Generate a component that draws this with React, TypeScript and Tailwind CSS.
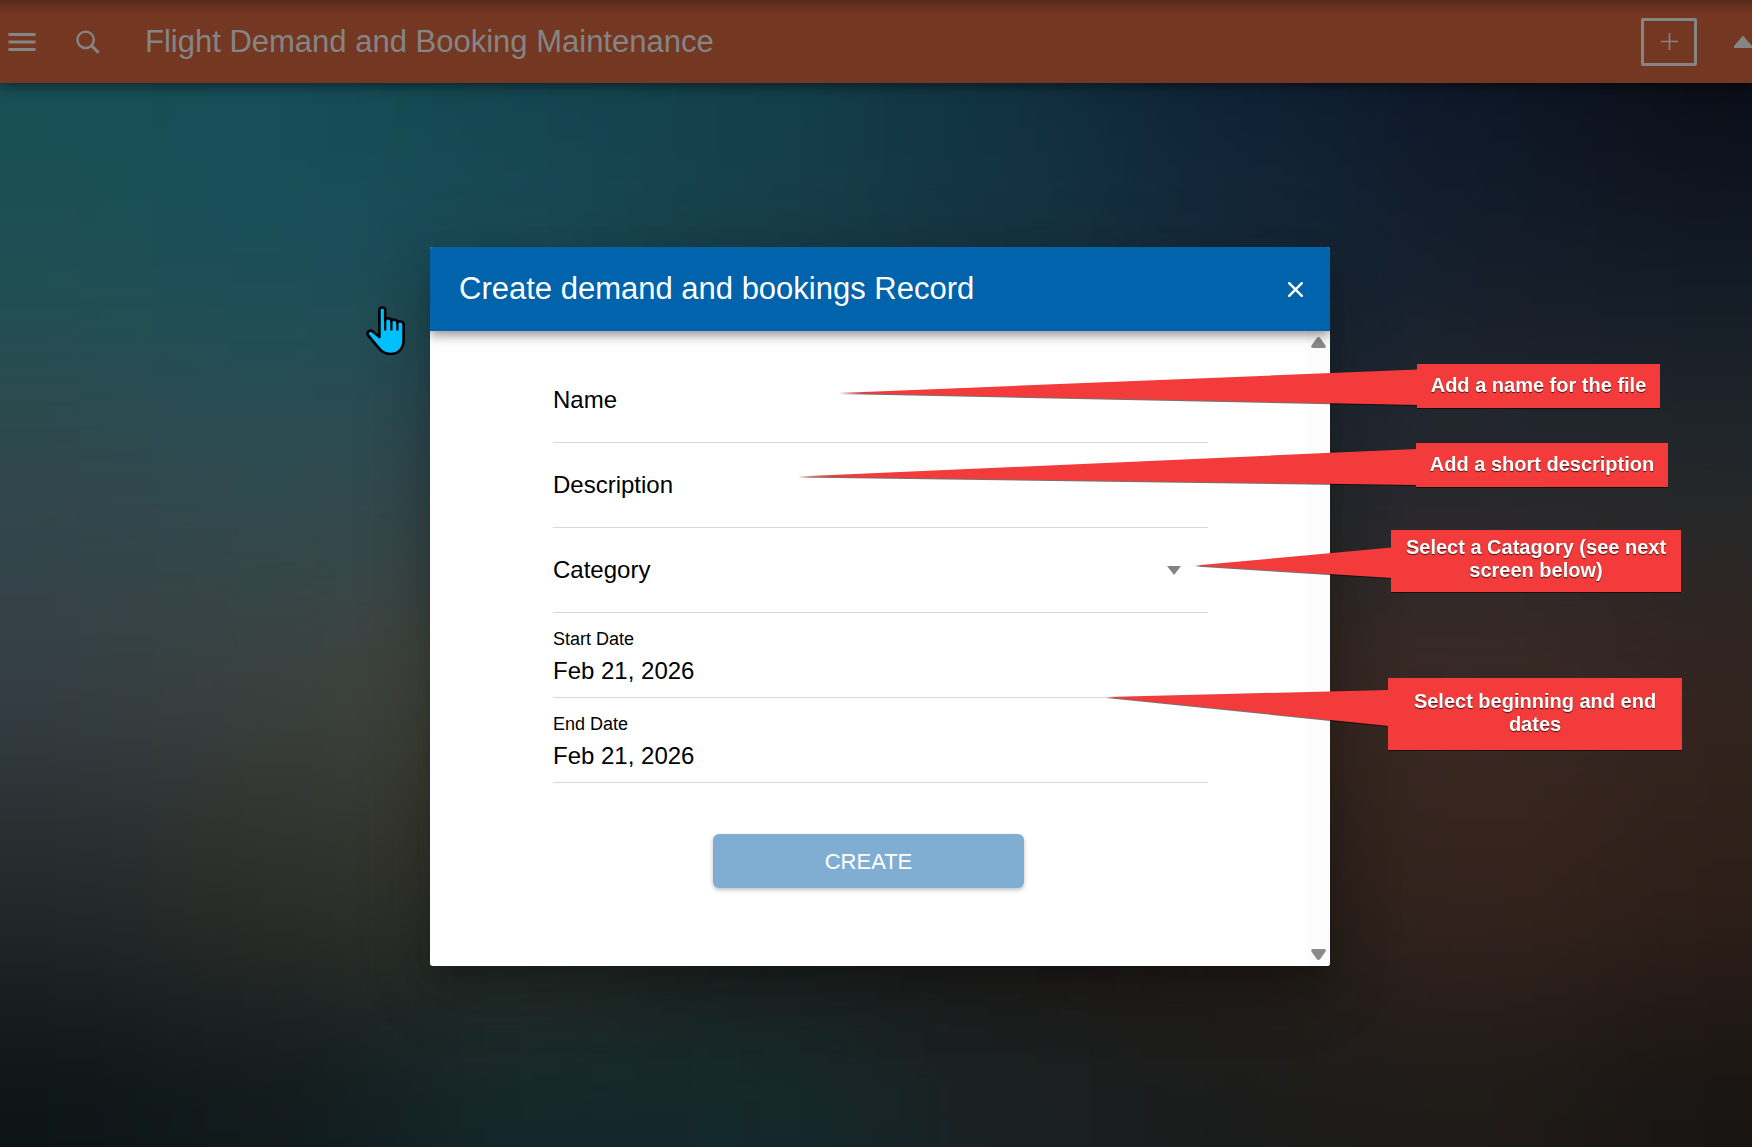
import { FunctionComponent, ReactElement, ReactNode } from 'react';
import { MdMenu } from 'react-icons/md';

/**
 * Colours of the soft backdrop, from top left to bottom right
 */
const backdropRows: string[][] = [
  ['#164e56', '#154d56', '#12454f', '#12404a', '#0f3240', '#0d2035', '#0c1626', '#0a0b14'],
  ['#1e5054', '#1b4f5a', '#1a4b55', '#183f4b', '#163544', '#15293a', '#141d2a', '#111a25'],
  ['#31484c', '#2e4b51', '#32484d', '#2a3438', '#28282b', '#202930', '#26282e', '#23282b'],
  ['#363f46', '#3b423f', '#46453b', '#2c2a24', '#2c2521', '#35271f', '#3b2a25', '#33241f'],
  ['#232a2a', '#2d2f2a', '#34332a', '#25241e', '#211d19', '#2a201b', '#36241d', '#2f1f19'],
  ['#0c1416', '#111a1c', '#13272a', '#13292c', '#1a2022', '#1a1c1b', '#1f1b18', '#181513']
];

/**
 * Used to render the blurred page backdrop, the outer
 * cells reach past the edge so that the blur does not fade there
 *
 * @returns The `Backdrop` component
 */
const Backdrop: FunctionComponent = (): ReactElement => {
  return (
    <svg
      className="absolute -inset-[5%] w-[110%] h-[110%] overflow-visible blur-[80px]"
      viewBox="0 0 8 6"
      preserveAspectRatio="none"
      shapeRendering="crispEdges"
      aria-hidden="true"
    >
      {
        backdropRows.map((row, y) => row.map((color, x) => (
          <rect
            key={`cell-${x}-${y}`}
            x={x === 0 ? -1 : x}
            y={y === 0 ? -1 : y}
            width={x === 0 || x === 7 ? 2 : 1}
            height={y === 0 || y === 5 ? 2 : 1}
            fill={color}
          />
        )))
      }
    </svg>
  );
};

/**
 * Used to render the top bar with the page title
 *
 * @returns The `AppHeader` component
 */
const AppHeader: FunctionComponent = (): ReactElement => {
  return (
    <header className="relative z-10 h-[83px] flex items-center pl-1 bg-[linear-gradient(#562a1a,#743722_14px)] text-[#858585] shadow-[0_3px_12px_rgba(0,0,0,0.5)]">
      <button type="button" aria-label="Menu">
        <MdMenu className="size-9" />
      </button>
      <button type="button" aria-label="Search" className="ml-9">
        <svg className="size-6" viewBox="0 0 24 24" fill="none" stroke="currentColor" aria-hidden="true">
          <circle cx="9.6" cy="9.8" r="8.2" strokeWidth="2.4" />
          <path d="M15.4 15.6L22.6 22.8" strokeWidth="3" />
        </svg>
      </button>
      <h1 className="ml-[45px] flex-1 text-[31px] leading-9 whitespace-nowrap">
        Flight Demand and Booking Maintenance
      </h1>
      <button
        type="button"
        aria-label="Add"
        className="w-14 h-12 flex items-center justify-center rounded-xs border-3 border-[#858585]"
      >
        <svg className="w-[17px] h-[17px]" viewBox="0 0 17 17" stroke="currentColor" strokeWidth="1.6">
          <path d="M8.5 0V17M0 8.5H17" />
        </svg>
      </button>
      <button type="button" aria-label="Collapse" className="ml-[37px]">
        <svg className="w-[18px] h-3" viewBox="0 0 18 12" fill="currentColor">
          <path d="M8.2 0.4Q9 -0.3 9.8 0.4L18 10V12H0V10Z" />
        </svg>
      </button>
    </header>
  );
};

interface FieldProps {
  readonly id: string;
  readonly label: string;
}

const rowClass = 'h-[85px] border-b border-[#d9d9d9]';

const TextField: FunctionComponent<FieldProps> = ({ id, label }): ReactElement => {
  return (
    <div className={`${rowClass} flex items-center gap-x-4`}>
      <label htmlFor={id} className="text-2xl">{label}</label>
      <input id={id} type="text" className="min-w-0 flex-1 h-12 text-2xl outline-none" />
    </div>
  );
};

const SelectField: FunctionComponent<FieldProps> = ({ id, label }): ReactElement => {
  return (
    <div className={`${rowClass} flex items-center gap-x-4 pr-[27px]`}>
      <label htmlFor={id} className="text-2xl">{label}</label>
      <select id={id} className="min-w-0 flex-1 h-12 appearance-none text-2xl outline-none">
        <option value="" />
      </select>
      <svg className="w-3.5 h-[9px] pointer-events-none" viewBox="0 0 14 9" fill="#838383" aria-hidden="true">
        <path d="M0 0H14L7 9Z" />
      </svg>
    </div>
  );
};

interface DateFieldProps extends FieldProps {
  readonly value: string;
}

const DateField: FunctionComponent<DateFieldProps> = ({ id, label, value }): ReactElement => {
  return (
    <div className={`${rowClass} flex flex-col gap-y-1 pt-3.5`}>
      <label htmlFor={id} className="text-lg leading-6">{label}</label>
      <input id={id} type="text" defaultValue={value} className="w-full h-8 text-2xl leading-8 outline-none" />
    </div>
  );
};

interface CalloutProps {
  readonly className: string;
  readonly boxClassName: string;
  readonly pointer: ReactNode;
  readonly children: ReactNode;
}

/**
 * Used to render a red note whose pointer reaches into the dialog
 *
 * @param props The component props
 * @returns The `Callout` component
 */
const Callout: FunctionComponent<CalloutProps> = ({ className, boxClassName, pointer, children }): ReactElement => {
  return (
    <div className={`absolute z-20 flex items-start drop-shadow-[0_1px_0_rgba(0,0,0,0.55)] ${className}`}>
      {pointer}
      <p className={`shrink-0 bg-[#f43b3b] text-center text-xl leading-[23px] font-bold text-white text-shadow-[0_1px_1px_rgba(0,0,0,0.7)] ${boxClassName}`}>
        {children}
      </p>
    </div>
  );
};

const HandPointer: FunctionComponent = (): ReactElement => {
  return (
    <svg
      className="absolute top-[59px] -left-16 w-10 h-[50px]"
      viewBox="0 0 40 50"
      fill="#00bfff"
      stroke="#000"
      strokeWidth="2.6"
      strokeLinejoin="round"
      aria-hidden="true"
    >
      <path d="M13.4 28V4C13.4 .6 19.2 .6 19.2 4V14C20 11.6 25 11.6 25.4 15C26.4 13 31.2 13 31.4 16.6C32.6 14.4 37.6 15 37.6 18.4V34C37.6 43 32 48 24.4 48C18.6 48 15 45.4 12.4 41.6L2.2 29.4C0 26.4 3.6 23.4 6.8 25.4L13.4 31Z" />
      <path fill="none" strokeWidth="2.2" d="M19.2 12V24.4M25.4 14V24.4M31.4 16V24.4" />
    </svg>
  );
};

const CreateDialog: FunctionComponent = (): ReactElement => {
  return (
    <section
      role="dialog"
      aria-labelledby="dialog-title"
      className="rounded-[3px] overflow-hidden bg-white text-black"
    >
      <div className="relative z-10 h-[84px] flex items-center justify-between pl-[29px] pr-[27px] bg-[#0063ab] text-white shadow-[0_3px_12px_rgba(0,0,0,0.5)]">
        <h2 id="dialog-title" className="text-[31px] leading-9">
          Create demand and bookings Record
        </h2>
        <button type="button" aria-label="Close">
          <svg className="size-[15px]" viewBox="0 0 15 15" stroke="currentColor" strokeWidth="2.4" strokeLinecap="round">
            <path d="M1.2 1.2L13.8 13.8M13.8 1.2L1.2 13.8" />
          </svg>
        </button>
      </div>
      <div className="flex">
        <form className="min-w-0 flex-1 pt-[27px] pb-[78px]">
          <div className="pl-[123px] pr-[99px]">
            <TextField id="name" label="Name" />
            <TextField id="description" label="Description" />
            <SelectField id="category" label="Category" />
            <DateField id="start-date" label="Start Date" value="Feb 21, 2026" />
            <DateField id="end-date" label="End Date" value="Feb 21, 2026" />
          </div>
          <button
            type="submit"
            className="mt-[51px] mx-auto w-[311px] h-[54px] flex items-center justify-center rounded-md bg-[#80aed3] text-[22px] text-white shadow-[0_2px_4px_rgba(0,0,0,0.25)]"
          >
            CREATE
          </button>
        </form>
        <div className="w-[23px] flex flex-col items-center justify-between pt-1.5 pb-1.5 bg-[#fcfcfc]" aria-hidden="true">
          <svg className="w-[15px] h-[11px]" viewBox="0 0 15 11" fill="#8a8a8a">
            <path d="M5.8 1Q7.5 -1 9.2 1L14.4 8.2Q15.6 11 13 11H2Q-.6 11 .6 8.2Z" />
          </svg>
          <svg className="w-[15px] h-[11px]" viewBox="0 0 15 11" fill="#8a8a8a">
            <path d="M5.8 10Q7.5 12 9.2 10L14.4 2.8Q15.6 0 13 0H2Q-.6 0 .6 2.8Z" />
          </svg>
        </div>
      </div>
    </section>
  );
};

const App: FunctionComponent = (): ReactElement => {
  return (
    <div className="relative min-h-screen flex flex-col overflow-hidden bg-[#16211f] font-['Liberation_Sans',Arial,sans-serif]">
      <Backdrop />
      <AppHeader />
      <main className="relative flex-1 flex items-start justify-center pt-41 pb-20 pl-2">
        <div className="relative w-full max-w-[900px] rounded-[3px] shadow-[0_16px_22px_-10px_rgba(0,0,0,0.2),0_36px_57px_4px_rgba(0,0,0,0.14),0_14px_69px_12px_rgba(0,0,0,0.12)]">
          <CreateDialog />
          <HandPointer />
          <Callout
            className="top-[117px] left-[411px]"
            boxClassName="w-[243px] h-11 pt-2.5"
            pointer={
              <svg className="shrink-0 w-[576px] h-11 overflow-visible" viewBox="0 0 576 44" fill="#f43b3b">
                <path d="M-2 29L577 5.5V41Z" />
              </svg>
            }
          >
            Add a name for the file
          </Callout>
          <Callout
            className="top-[196px] left-[370px]"
            boxClassName="w-[252px] h-11 pt-2.5"
            pointer={
              <svg className="shrink-0 w-[616px] h-11 overflow-visible" viewBox="0 0 616 44" fill="#f43b3b">
                <path d="M-2 33.6L617 6V42Z" />
              </svg>
            }
          >
            Add a short description
          </Callout>
          <Callout
            className="top-[283px] left-[766px]"
            boxClassName="w-[290px] h-[62px] px-3 pt-1.5"
            pointer={
              <svg className="shrink-0 w-[195px] h-[62px] overflow-visible" viewBox="0 0 195 62" fill="#f43b3b">
                <path d="M-1 35.6L196 17.6V48Z" />
              </svg>
            }
          >
            Select a Catagory (see next screen below)
          </Callout>
          <Callout
            className="top-[431px] left-[676px]"
            boxClassName="w-[294px] h-[72px] px-3 pt-3"
            pointer={
              <svg className="shrink-0 w-[282px] h-[72px] overflow-visible" viewBox="0 0 282 72" fill="#f43b3b">
                <path d="M0 19L283 12V48Z" />
              </svg>
            }
          >
            Select beginning and end dates
          </Callout>
        </div>
      </main>
    </div>
  );
};

export default App;
